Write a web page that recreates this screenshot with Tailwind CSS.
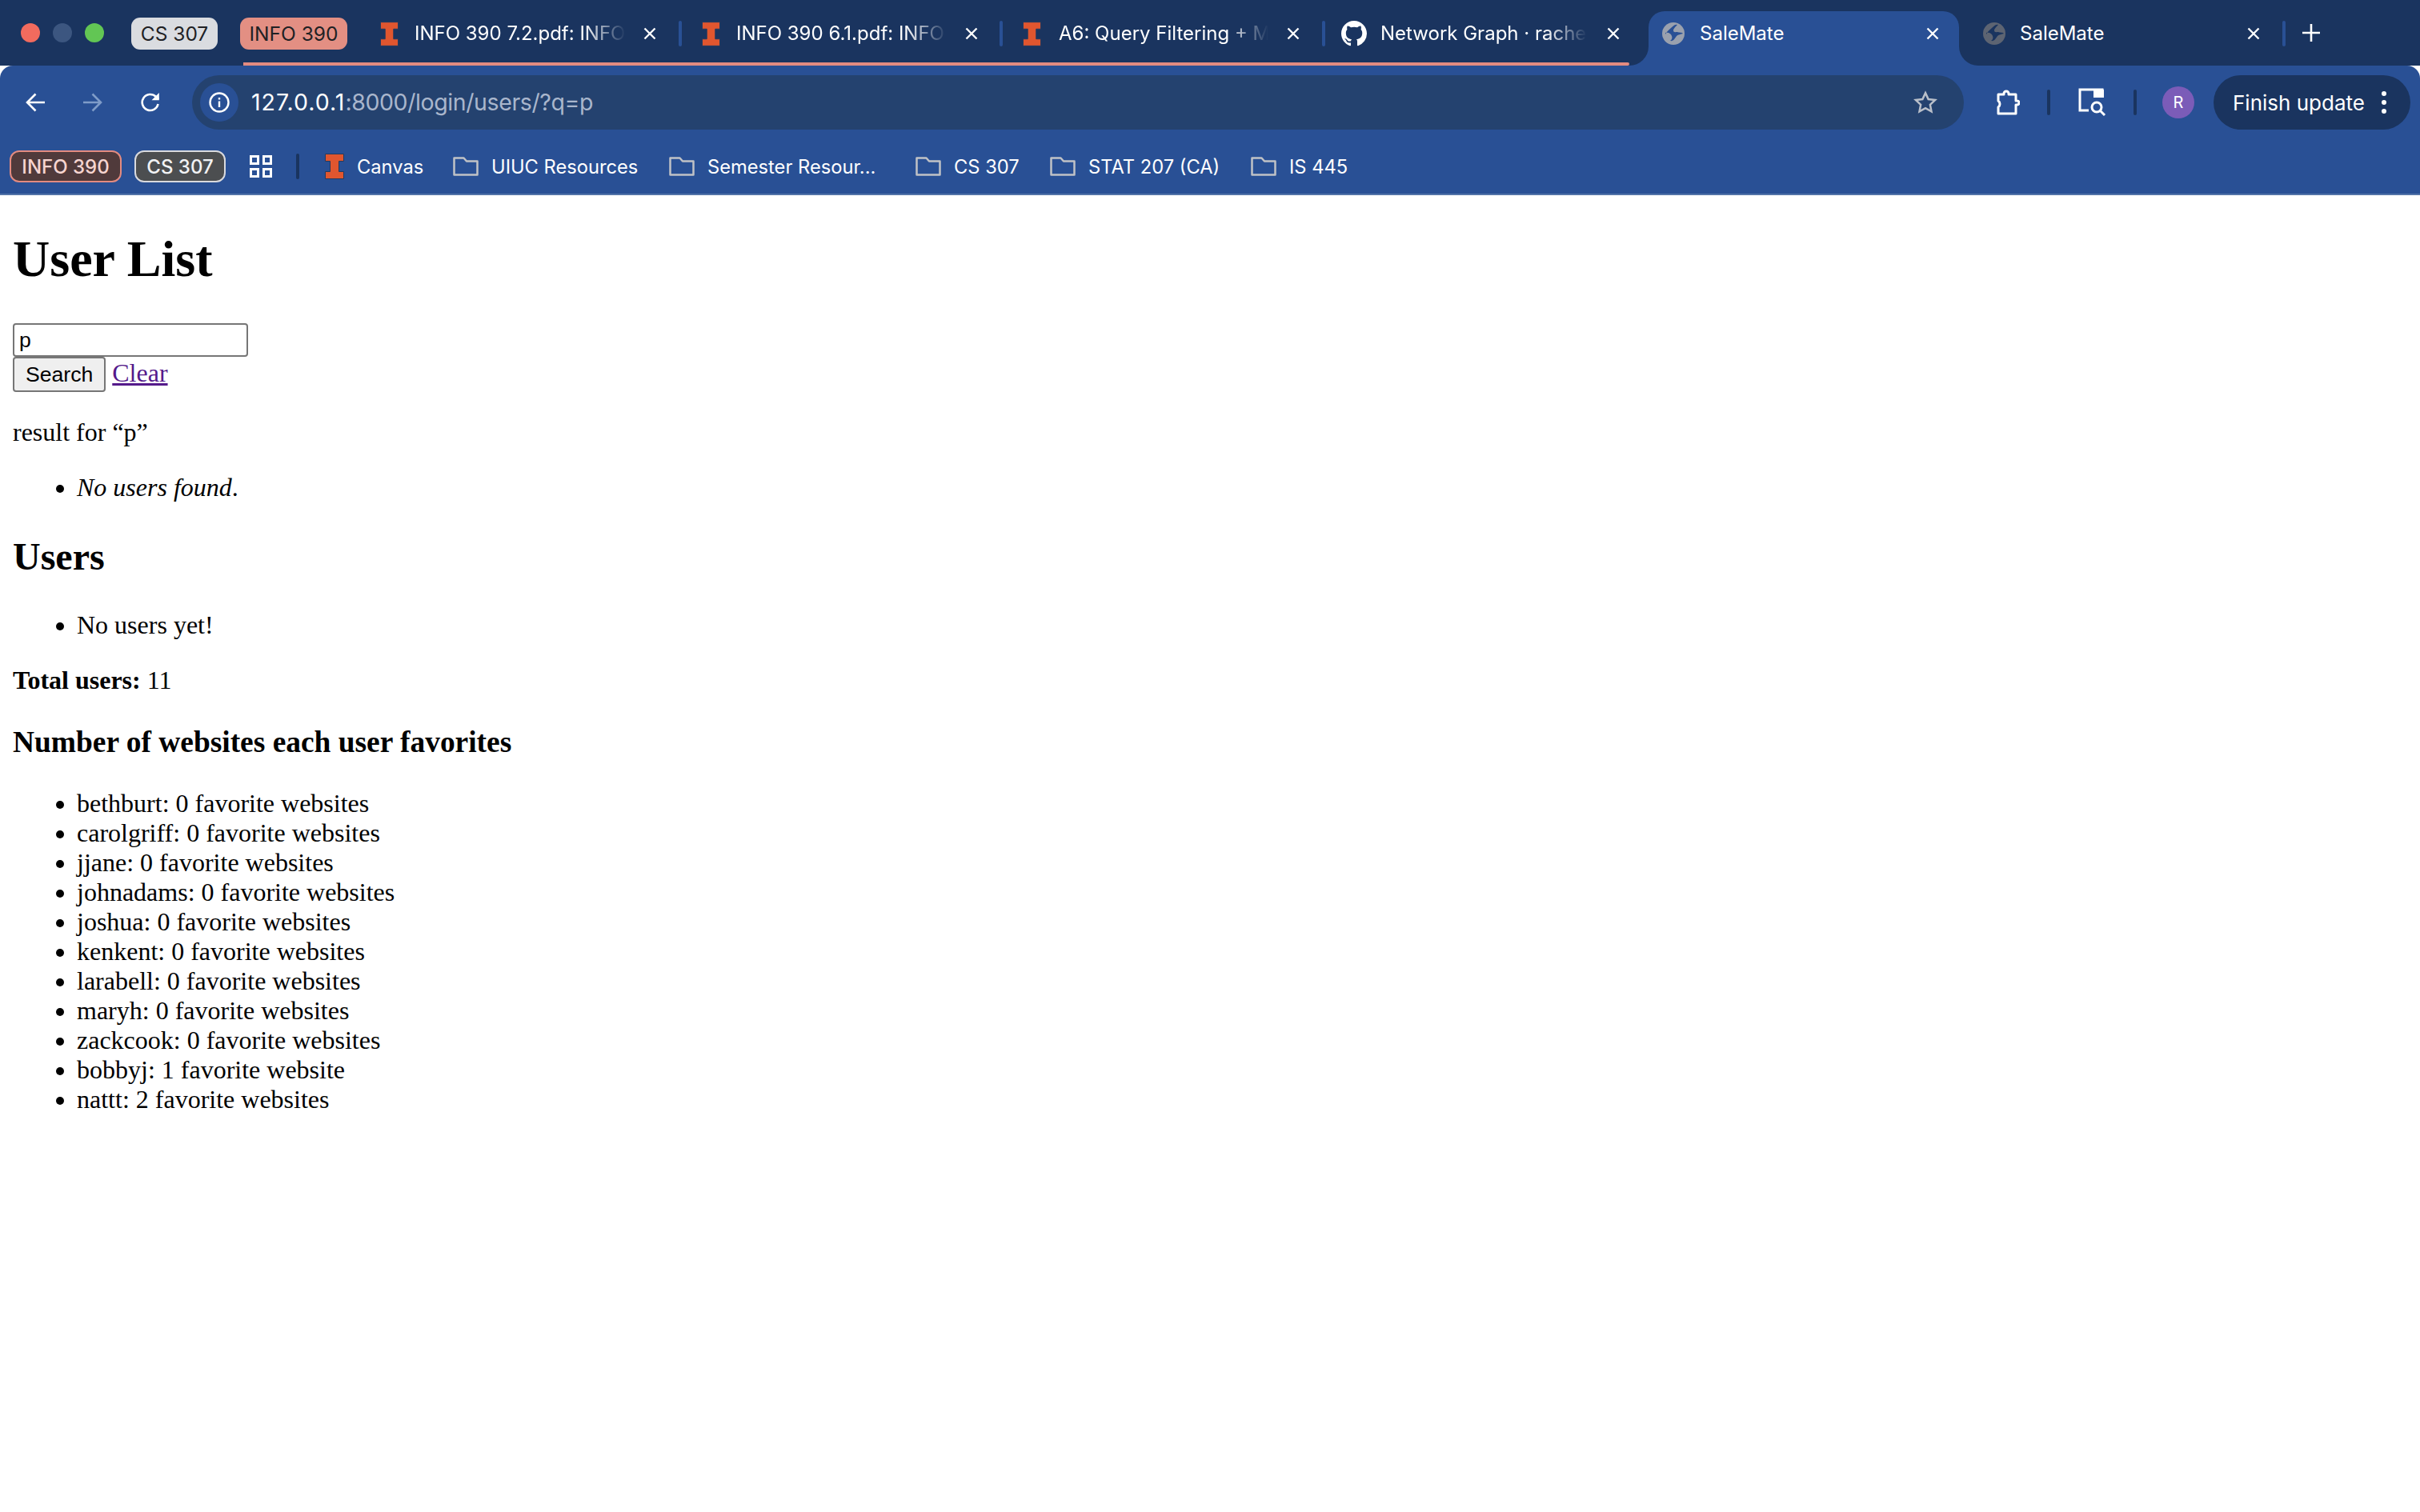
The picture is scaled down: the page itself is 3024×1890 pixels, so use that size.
<!DOCTYPE html>
<html lang="en">
<head>
<meta charset="utf-8">
<title>SaleMate</title>
<script src="https://cdn.jsdelivr.net/npm/@tailwindcss/browser@4"></script>
</head>
<body class="bg-white text-black font-['Liberation_Serif',serif] text-[32px] leading-[37px]">

<!-- browser chrome -->
<header class="font-['Inter',sans-serif] text-white">
  <!-- tab strip -->
  <div class="relative flex items-center h-[82px] bg-[#1a345f] text-[24px] leading-[32px]">
    <div class="flex gap-[16px] pl-[26px] w-[164px]">
      <span class="w-[24px] h-[24px] rounded-full bg-[#f26b5e]"></span>
      <span class="w-[24px] h-[24px] rounded-full bg-[#3c5680]"></span>
      <span class="w-[24px] h-[24px] rounded-full bg-[#62c654]"></span>
    </div>
    <span class="flex items-center justify-center w-[108px] h-[40px] mt-[2px] rounded-[11px] bg-[#dadce0] text-[#202124] text-[24.5px]">CS 307</span>
    <span class="flex items-center justify-center w-[134px] h-[40px] mt-[2px] ml-[28px] rounded-[11px] bg-[#e38f83] text-[#202124] text-[24.5px]">INFO 390</span>

    <!-- tab group underline -->
    <div class="absolute left-[304px] top-[78px] w-[1732px] h-[4px] rounded-r-full bg-[#e38b80]"></div>

    <!-- tab 1 -->
    <div class="flex items-center w-[396px] h-[76px] ml-[18px] pl-[23px] mt-[2px]">
      <svg class="w-[23px] h-[31px] shrink-0" viewBox="0 0 24 32"><path d="M.5.500h23v9h-6v13h6v9H.500v-9h6v-13h-6z" fill="#e0562f" stroke="#233a5e"/></svg>
      <span class="ml-[20px] w-[264px] overflow-hidden whitespace-nowrap [mask-image:linear-gradient(to_right,black_80%,transparent)]">INFO 390 7.2.pdf: INFO 390</span>
      <svg class="ml-[22px] w-[16px] h-[16px] shrink-0" viewBox="0 0 16 16" stroke="white" stroke-width="2.4"><path d="M1.5 1.5l13 13M14.500 1.500l-13 13"/></svg>
    </div>
    <span class="w-[4px] h-[32px] mt-[2px] rounded-full bg-[#295095]"></span>

    <!-- tab 2 -->
    <div class="flex items-center w-[397px] h-[76px] pl-[25px] mt-[2px]">
      <svg class="w-[23px] h-[31px] shrink-0" viewBox="0 0 24 32"><path d="M.5.500h23v9h-6v13h6v9H.500v-9h6v-13h-6z" fill="#e0562f" stroke="#233a5e"/></svg>
      <span class="ml-[20px] w-[264px] overflow-hidden whitespace-nowrap [mask-image:linear-gradient(to_right,black_80%,transparent)]">INFO 390 6.1.pdf: INFO 390</span>
      <svg class="ml-[22px] w-[16px] h-[16px] shrink-0" viewBox="0 0 16 16" stroke="white" stroke-width="2.4"><path d="M1.5 1.5l13 13M14.500 1.500l-13 13"/></svg>
    </div>
    <span class="w-[4px] h-[32px] mt-[2px] rounded-full bg-[#295095]"></span>

    <!-- tab 3 -->
    <div class="flex items-center w-[399px] h-[76px] pl-[25px] mt-[2px]">
      <svg class="w-[23px] h-[31px] shrink-0" viewBox="0 0 24 32"><path d="M.5.500h23v9h-6v13h6v9H.500v-9h6v-13h-6z" fill="#e0562f" stroke="#233a5e"/></svg>
      <span class="ml-[22px] w-[262px] overflow-hidden whitespace-nowrap [mask-image:linear-gradient(to_right,black_80%,transparent)]">A6: Query Filtering + Multiple</span>
      <svg class="ml-[23px] w-[16px] h-[16px] shrink-0" viewBox="0 0 16 16" stroke="white" stroke-width="2.4"><path d="M1.5 1.5l13 13M14.500 1.500l-13 13"/></svg>
    </div>
    <span class="w-[4px] h-[32px] mt-[2px] rounded-full bg-[#295095]"></span>

    <!-- tab 4 -->
    <div class="flex items-center w-[404px] h-[76px] pl-[20px] mt-[2px]">
      <svg class="w-[32px] h-[32px] shrink-0" viewBox="0 0 16 16" fill="white"><path d="M8 0C3.58 0 0 3.58 0 8c0 3.54 2.29 6.53 5.47 7.59.4.07.55-.17.55-.38 0-.19-.01-.82-.01-1.49-2.01.37-2.53-.49-2.69-.94-.09-.23-.48-.94-.82-1.13-.28-.15-.68-.52-.01-.53.63-.01 1.08.58 1.23.82.72 1.21 1.87.87 2.33.66.07-.52.28-.87.51-1.07-1.78-.2-3.64-.89-3.64-3.95 0-.87.31-1.59.82-2.15-.08-.2-.36-1.02.08-2.12 0 0 .67-.21 2.2.82.64-.18 1.32-.27 2-.27.68 0 1.36.09 2 .27 1.53-1.04 2.2-.82 2.2-.82.44 1.1.16 1.92.08 2.12.51.56.82 1.27.82 2.15 0 3.07-1.87 3.75-3.65 3.95.29.25.54.73.54 1.48 0 1.07-.01 1.93-.01 2.2 0 .21.15.46.55.38A8.013 8.013 0 0016 8c0-4.42-3.58-8-8-8z"/></svg>
      <span class="ml-[17px] w-[258px] overflow-hidden whitespace-nowrap [mask-image:linear-gradient(to_right,black_80%,transparent)]">Network Graph · rachel</span>
      <svg class="ml-[25px] w-[16px] h-[16px] shrink-0" viewBox="0 0 16 16" stroke="white" stroke-width="2.4"><path d="M1.5 1.5l13 13M14.500 1.500l-13 13"/></svg>
    </div>

    <!-- active tab -->
    <div class="relative flex items-center self-end w-[388px] h-[68px] pl-[17px] pb-[13px] rounded-t-[20px] bg-[#295095]">
      <div class="absolute -left-[24px] bottom-0 w-[24px] h-[24px] bg-[#295095]"><div class="w-full h-full rounded-br-[24px] bg-[#1a345f]"></div></div>
      <div class="absolute -right-[24px] bottom-0 w-[24px] h-[24px] bg-[#295095]"><div class="w-full h-full rounded-bl-[24px] bg-[#1a345f]"></div></div>
      <svg class="w-[28px] h-[28px] shrink-0" viewBox="0 0 28 28"><circle cx="14" cy="14" r="14" fill="#9aa1ae"/><path d="M4 13c4-1 7 1 8 4 1 2 0 5-2 6 4 1 6-3 8-6 2-2 5-2 8-3-1-2-5-1-7-2-2 0-5 1-5-2 0-2 3-5 5-7-4-1-5 2-8 4-2 2-5 4-7 8z" fill="#295095"/></svg>
      <span class="ml-[19px] w-[270px] whitespace-nowrap">SaleMate</span>
      <svg class="ml-[13px] w-[16px] h-[16px] shrink-0" viewBox="0 0 16 16" stroke="white" stroke-width="2.4"><path d="M1.5 1.5l13 13M14.500 1.500l-13 13"/></svg>
    </div>

    <!-- last tab -->
    <div class="flex items-center w-[404px] h-[76px] pl-[30px] mt-[2px]">
      <svg class="w-[28px] h-[28px] shrink-0" viewBox="0 0 28 28"><circle cx="14" cy="14" r="14" fill="#5d6472"/><path d="M4 13c4-1 7 1 8 4 1 2 0 5-2 6 4 1 6-3 8-6 2-2 5-2 8-3-1-2-5-1-7-2-2 0-5 1-5-2 0-2 3-5 5-7-4-1-5 2-8 4-2 2-5 4-7 8z" fill="#1a345f"/></svg>
      <span class="ml-[18px] w-[280px] whitespace-nowrap">SaleMate</span>
      <svg class="ml-[4px] w-[16px] h-[16px] shrink-0" viewBox="0 0 16 16" stroke="white" stroke-width="2.4"><path d="M1.5 1.5l13 13M14.500 1.500l-13 13"/></svg>
    </div>
    <span class="w-[4px] h-[32px] mt-[2px] rounded-full bg-[#295095]"></span>
    <svg class="ml-[21px] w-[22px] h-[22px]" viewBox="0 0 22 22" stroke="white" stroke-width="2.6"><path d="M11 0v22M0 11h22"/></svg>
  </div>

  <!-- toolbar -->
  <div class="rounded-t-[16px] bg-[#295095]">
    <div class="flex items-center h-[92px] pt-[12px] pb-[12px]">
      <svg class="ml-[32px] w-[24px] h-[24px] shrink-0" viewBox="0 0 24 24" fill="none" stroke="white" stroke-width="2.600"><path d="M24 12H2M12.500 1.500L2 12l10.500 10.500"/></svg>
      <svg class="ml-[48px] w-[24px] h-[24px] shrink-0" viewBox="0 0 24 24" fill="none" stroke="#7f9cc8" stroke-width="2.600"><path d="M0 12h22M11.500 1.500L22 12 11.500 22.500"/></svg>
      <svg class="ml-[48px] w-[24px] h-[24px] shrink-0" viewBox="0 0 24 24" fill="none" stroke="white" stroke-width="2.600"><path d="M21.500 14a10 10 0 1 1-2.800-9.200L22 8"/><path d="M22.800 0v9.300h-9.300" stroke="none" fill="white"/></svg>

      <!-- address bar -->
      <div class="flex items-center ml-[40px] w-[2214px] h-[68px] pl-[10px] pr-[33px] rounded-full bg-[#24426f] shrink-0">
        <div class="flex items-center justify-center w-[48px] h-[48px] rounded-full bg-[#295095]">
          <svg class="w-[26px] h-[26px]" viewBox="0 0 26 26" fill="none" stroke="white" stroke-width="2.400"><circle cx="13" cy="13" r="11.500"/><path d="M13 11.500v7.500M13 7v2.500"/></svg>
        </div>
        <span class="ml-[16px] text-[28.5px] leading-[36px] whitespace-nowrap"><span class="tracking-[1px]">127.0.0.1</span><span class="text-[#a9b6cc] tracking-[-0.4px]">:8000/login/users/?q=p</span></span>
        <svg class="ml-auto w-[30px] h-[30px]" viewBox="0 0 24 24" fill="none" stroke="#b9bfc9" stroke-width="2"><path d="M12 2.500l2.900 6.300 6.800.8-5 4.700 1.300 6.800-6-3.400-6 3.400 1.300-6.800-5-4.700 6.800-.8z"/></svg>
      </div>

      <svg class="ml-[38px] w-[32px] h-[32px] shrink-0" viewBox="0 0 32 32" fill="none" stroke="white" stroke-width="3" stroke-linejoin="round"><path d="M5 6h7V5a3 3 0 0 1 6 0v1h9v8h1.500a2.500 2.500 0 0 1 0 5H27v11H5v-8a5 5 0 0 0 0-8z"/></svg>
      <span class="ml-[34px] w-[4px] h-[32px] rounded-full bg-[#1a345f]"></span>
      <svg class="ml-[35px] w-[36px] h-[36px] shrink-0" viewBox="0 0 36 36" fill="none" stroke="white" stroke-width="3"><path d="M13 28H2V2h28v8"/><path d="M19 2h13v10H19z" fill="white" stroke="none"/><circle cx="23" cy="24" r="6"/><path d="M27.500 28.500L33 34"/></svg>
      <span class="ml-[33px] w-[4px] h-[32px] rounded-full bg-[#1a345f]"></span>
      <span class="flex items-center justify-center ml-[32px] w-[40px] h-[40px] rounded-full bg-[#7b5cb8] text-[20px] shrink-0">R</span>
      <div class="flex items-center ml-[24px] w-[246px] h-[68px] pl-[24px] rounded-full bg-[#1a345f] shrink-0">
        <span class="text-[26px] whitespace-nowrap">Finish update</span>
        <svg class="ml-[21px] w-[6px] h-[28px]" viewBox="0 0 6 28" fill="white"><circle cx="3" cy="3" r="3"/><circle cx="3" cy="14" r="3"/><circle cx="3" cy="25" r="3"/></svg>
      </div>
    </div>

    <!-- bookmarks bar -->
    <div class="flex items-center h-[70px] border-b-2 border-[#5273a8] text-[23.7px]">
      <span class="flex items-center justify-center ml-[12px] w-[140px] h-[40px] rounded-[12px] border-[2px] border-[#e38b80] bg-[#503a3b] text-[#f6d5d0] text-[24px] font-medium">INFO 390</span>
      <span class="flex items-center justify-center ml-[16px] w-[114px] h-[40px] rounded-[12px] border-[2px] border-[#d9dade] bg-[#4c4e50] text-[#f1f2f4] text-[24px] font-medium">CS 307</span>
      <svg class="ml-[30px] w-[28px] h-[28px]" viewBox="0 0 28 28" fill="none" stroke="white" stroke-width="3"><path d="M1.500 1.500h9v9h-9zM17.500 1.500h9v9h-9zM1.500 17.500h9v9h-9zM17.500 17.500h9v9h-9z"/></svg>
      <span class="ml-[30px] w-[4px] h-[32px] rounded-full bg-[#1a345f]"></span>
      <svg class="ml-[32px] w-[24px] h-[32px]" viewBox="0 0 24 32"><path d="M.5.500h23v9h-6v13h6v9H.500v-9h6v-13h-6z" fill="#e0562f" stroke="#233a5e"/></svg>
      <span class="ml-[16px] w-[120px]">Canvas</span>

      <div class="flex items-center w-[270px]">
        <svg class="w-[32px] h-[24px]" viewBox="0 0 32 24" fill="none" stroke="#c0c2c6" stroke-width="2.500"><path d="M1.500 22.500V1.500h12l3.500 4h13.500v17z" stroke-linejoin="round"/></svg>
        <span class="ml-[16px] whitespace-nowrap">UIUC Resources</span>
      </div>
      <div class="flex items-center w-[308px]">
        <svg class="w-[32px] h-[24px]" viewBox="0 0 32 24" fill="none" stroke="#c0c2c6" stroke-width="2.500"><path d="M1.500 22.500V1.500h12l3.500 4h13.500v17z" stroke-linejoin="round"/></svg>
        <span class="ml-[16px] whitespace-nowrap">Semester Resour...</span>
      </div>
      <div class="flex items-center w-[168px]">
        <svg class="w-[32px] h-[24px]" viewBox="0 0 32 24" fill="none" stroke="#c0c2c6" stroke-width="2.500"><path d="M1.500 22.500V1.500h12l3.500 4h13.500v17z" stroke-linejoin="round"/></svg>
        <span class="ml-[16px] whitespace-nowrap">CS 307</span>
      </div>
      <div class="flex items-center w-[251px]">
        <svg class="w-[32px] h-[24px]" viewBox="0 0 32 24" fill="none" stroke="#c0c2c6" stroke-width="2.500"><path d="M1.500 22.500V1.500h12l3.500 4h13.500v17z" stroke-linejoin="round"/></svg>
        <span class="ml-[16px] whitespace-nowrap">STAT 207 (CA)</span>
      </div>
      <div class="flex items-center">
        <svg class="w-[32px] h-[24px]" viewBox="0 0 32 24" fill="none" stroke="#c0c2c6" stroke-width="2.500"><path d="M1.500 22.500V1.500h12l3.500 4h13.500v17z" stroke-linejoin="round"/></svg>
        <span class="ml-[16px] whitespace-nowrap">IS 445</span>
      </div>
    </div>
  </div>
</header>

<!-- page content -->
<main class="px-[16px]">
  <h1 class="pt-[43px] mb-[43px] text-[64px] leading-[74px] font-bold">User List</h1>

  <form>
    <input type="text" value="p" class="block w-[294px] h-[42px] px-[6px] rounded-[4px] border-[2px] border-[#767676] font-['Liberation_Sans',sans-serif] text-[26.6px]">
    <button type="button" class="h-[44px] px-[14px] rounded-[4px] border-[2px] border-[#767676] bg-[#efefef] font-['Liberation_Sans',sans-serif] text-[26.6px]">Search</button>
    <a href="#" class="text-[#551a8b] underline">Clear</a>
  </form>

  <p class="mt-[32px]">result for “p”</p>
  <ul class="my-[32px] pl-[80px] list-disc">
    <li><em>No users found</em>.</li>
  </ul>

  <h2 class="mt-[40px] mb-[40px] text-[48px] leading-[55px] font-bold">Users</h2>
  <ul class="my-[32px] pl-[80px] list-disc">
    <li>No users yet!</li>
  </ul>

  <p><strong>Total users:</strong> 11</p>

  <h3 class="mt-[37px] mb-[37px] text-[37.44px] leading-[43px] font-bold">Number of websites each user favorites</h3>
  <ul class="pl-[80px] list-disc">
    <li>bethburt: 0 favorite websites</li>
    <li>carolgriff: 0 favorite websites</li>
    <li>jjane: 0 favorite websites</li>
    <li>johnadams: 0 favorite websites</li>
    <li>joshua: 0 favorite websites</li>
    <li>kenkent: 0 favorite websites</li>
    <li>larabell: 0 favorite websites</li>
    <li>maryh: 0 favorite websites</li>
    <li>zackcook: 0 favorite websites</li>
    <li>bobbyj: 1 favorite website</li>
    <li>nattt: 2 favorite websites</li>
  </ul>
</main>

</body>
</html>
